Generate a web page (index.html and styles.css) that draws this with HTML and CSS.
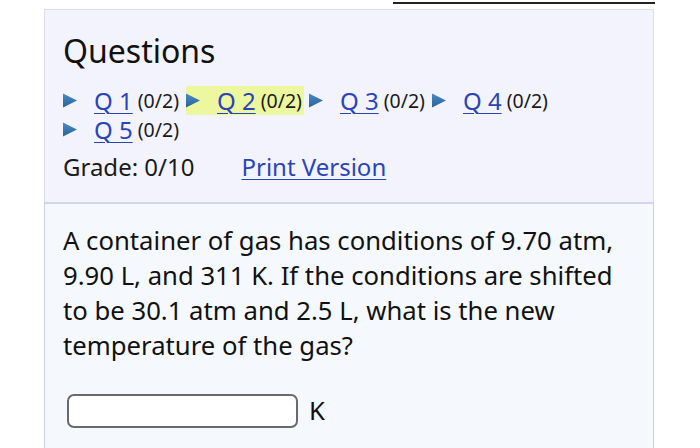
FILE: index.html
```html
<!DOCTYPE html>
<html>
<head>
<meta charset="utf-8">
<link rel="stylesheet" href="styles.css">
</head>
<body>
<div class="topbar"><a class="instr" href="#">Show the instructions</a></div>
<section class="qpanel">
  <h2 class="qtitle">Questions</h2>
  <div class="qnav">
    <span class="qitem"><svg class="tri" viewBox="0 0 14 14"><defs><linearGradient id="g1" x1="0" y1="0" x2="0" y2="1"><stop offset="0" stop-color="#4a8bc4"/><stop offset="1" stop-color="#28639c"/></linearGradient></defs><path d="M0 0 L14 7 L0 14 Z" fill="url(#g1)"/></svg><a class="qlink" href="#">Q 1</a><span class="score">(0/2)</span></span>
    <span class="qitem current"><svg class="tri" viewBox="0 0 14 14"><path d="M0 0 L14 7 L0 14 Z" fill="url(#g1)"/></svg><a class="qlink" href="#">Q 2</a><span class="score">(0/2)</span></span>
    <span class="qitem"><svg class="tri" viewBox="0 0 14 14"><path d="M0 0 L14 7 L0 14 Z" fill="url(#g1)"/></svg><a class="qlink" href="#">Q 3</a><span class="score">(0/2)</span></span>
    <span class="qitem"><svg class="tri" viewBox="0 0 14 14"><path d="M0 0 L14 7 L0 14 Z" fill="url(#g1)"/></svg><a class="qlink" href="#">Q 4</a><span class="score">(0/2)</span></span>
    <span class="qitem"><svg class="tri" viewBox="0 0 14 14"><path d="M0 0 L14 7 L0 14 Z" fill="url(#g1)"/></svg><a class="qlink" href="#">Q 5</a><span class="score">(0/2)</span></span>
  </div>
  <div class="grade-row"><span class="grade">Grade: 0/10</span><a class="print" href="#">Print Version</a></div>
</section>
<section class="qbody">
  <p class="qtext">A container of gas has conditions of 9.70 atm, 9.90 L, and 311 K. If the conditions are shifted to be 30.1 atm and 2.5 L, what is the new temperature of the gas?</p>
  <div class="answer"><input class="ans-input" type="text"><span class="unit">K</span></div>
</section>
</body>
</html>
```

FILE: styles.css
```css
* { box-sizing: border-box; }
html, body { margin: 0; padding: 0; background: #fff; }
body {
  font-family: "Noto Sans", "Open Sans", sans-serif;
  color: #1a1a1a;
  width: 700px;
  height: 448px;
  overflow: hidden;
}
.topbar {
  height: 9px;
  display: flex;
  justify-content: flex-end;
  align-items: flex-end;
  padding-right: 45px;
  overflow: hidden;
}
.instr {
  display: block;
  width: 262px;
  font-size: 24px;
  line-height: 24px;
  color: #222;
  text-decoration: none;
  border-bottom: 2px solid #222;
  margin-bottom: 5px;
  white-space: nowrap;
  overflow: hidden;
}
.qpanel {
  margin-left: 44px;
  width: 610px;
  background: #f3f3fd;
  border: 1px solid #dcdcf2;
  border-bottom: none;
  padding: 21px 18px 20px 18px;
}
.qtitle {
  margin: 0 0 15px 0;
  font-weight: normal;
  font-size: 32px;
  line-height: 40px;
  color: #111;
}
.qnav {
  display: flex;
  flex-wrap: wrap;
  column-gap: 5px;
  row-gap: 0;
}
.qitem {
  display: inline-flex;
  align-items: center;
  height: 29px;
  line-height: 24px;
  padding-right: 2px;
}
.qitem.current { background: #ecf7a0; }
.tri { width: 14px; height: 15px; margin-right: 17px; flex: none; }
.qlink {
  font-size: 24px;
  line-height: 24px;
  color: #2a45b8;
  text-decoration: underline;
  text-decoration-thickness: 1px;
  text-underline-offset: 3px;
  margin-right: 5px;
}
.score { font-size: 19.5px; line-height: 24px; color: #1a1a1a; }
.grade-row {
  display: flex;
  align-items: baseline;
  gap: 47px;
  margin-top: 8px;
  font-size: 24px;
  line-height: 30px;
}
.print { color: #2a45b8; font-size: 24px; text-decoration-thickness: 1px; text-underline-offset: 3px; }
.qbody {
  margin-left: 44px;
  width: 610px;
  height: 260px;
  background: #f5f9fe;
  border-left: 1px solid #cdd2da;
  border-right: 1px solid #cdd2da;
  border-top: 2px solid #d2d5ec;
  padding: 19px 38px 0 18px;
}
.qtext {
  margin: 0;
  font-size: 25.7px;
  line-height: 35px;
  color: #111;
}
.answer {
  display: flex;
  align-items: center;
  gap: 11px;
  margin-top: 30px;
  padding-left: 4px;
}
.ans-input {
  width: 231px;
  height: 34px;
  border: 2px solid #6a6a6a;
  border-radius: 7px;
  background: #fff;
  font: inherit;
}
.unit { font-size: 25.7px; color: #111; }
```
